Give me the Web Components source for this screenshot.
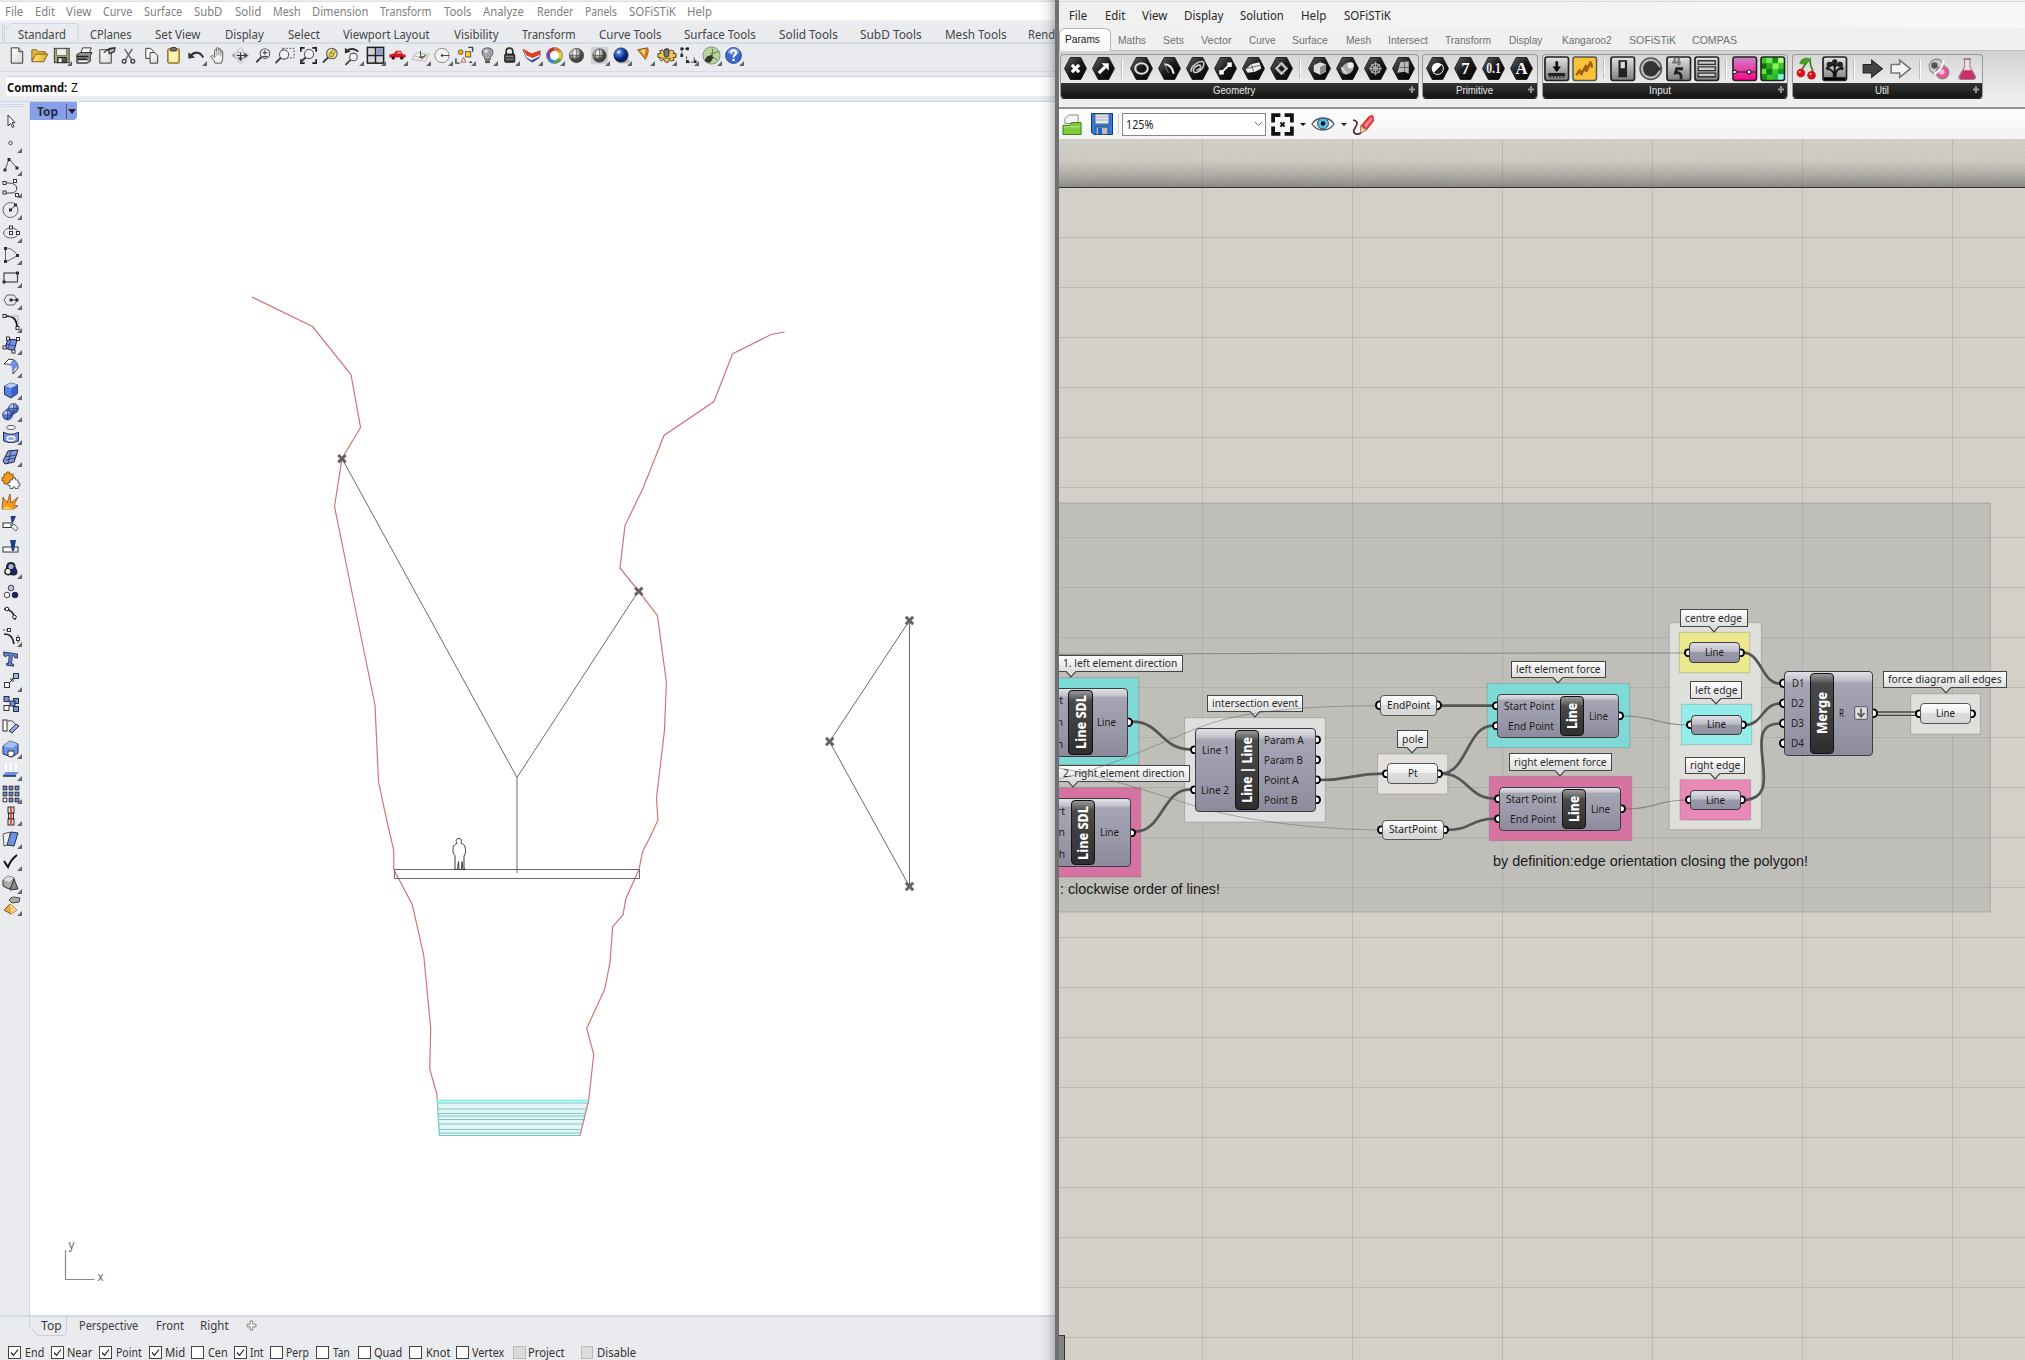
<!DOCTYPE html>
<html lang="en"><head><meta charset="utf-8"><title>Rhino and Grasshopper</title>
<style>
html,body{margin:0;padding:0;overflow:hidden}
body{width:2025px;height:1360px;display:flex;font-family:"Noto Sans","Open Sans",sans-serif;background:#e9ebef}
</style></head><body>
<rhino-app></rhino-app><gh-app></gh-app>
<script>
/* ---------- icon library, every glyph on a 22 x 22 grid ---------- */
const G = {};
const mag = (x,y,r,f='#eef2f4') => `<path d="M${x-r*.7} ${y+r*.7}L${x-r*.7-5} ${y+r*.7+5}" stroke="#444" stroke-width="2" stroke-linecap="round"/><circle cx="${x}" cy="${y}" r="${r}" fill="${f}" stroke="#555" stroke-width="1.1"/>`;
const sq = (x,y,f='#fff',s=3) => `<rect x="${x-s/2}" y="${y-s/2}" width="${s}" height="${s}" fill="${f}" stroke="#222" stroke-width=".9"/>`;
const ball = (x,y,r,g) => `<circle cx="${x}" cy="${y}" r="${r}" fill="url(#${g})" stroke="#333" stroke-width=".6"/>`;
const DEFS = `<defs><radialGradient id="gr" cx=".35" cy=".3"><stop offset="0" stop-color="#fff"/><stop offset=".55" stop-color="#b8b8b8"/><stop offset="1" stop-color="#444"/></radialGradient>
<radialGradient id="bl" cx=".35" cy=".3"><stop offset="0" stop-color="#fff"/><stop offset=".35" stop-color="#3f78e0"/><stop offset="1" stop-color="#05206e"/></radialGradient>
<radialGradient id="bm" cx=".35" cy=".3"><stop offset="0" stop-color="#cfdcff"/><stop offset="1" stop-color="#3b5ec4"/></radialGradient>
<linearGradient id="ye" x2="1"><stop offset="0" stop-color="#fbe98c"/><stop offset="1" stop-color="#e2ad2c"/></linearGradient>
<linearGradient id="pg" x2="1" y2="1"><stop offset="0" stop-color="#fff"/><stop offset="1" stop-color="#d8d8d8"/></linearGradient>
<linearGradient id="mt" x2="0" y2="1"><stop offset="0" stop-color="#e4e4e4"/><stop offset="1" stop-color="#7d7d7d"/></linearGradient>
<linearGradient id="mk" x2="1" y2="1"><stop offset="0" stop-color="#666"/><stop offset=".5" stop-color="#181818"/><stop offset="1" stop-color="#000"/></linearGradient>
<linearGradient id="pk" x2="0" y2="1"><stop offset="0" stop-color="#c8c"/><stop offset="1" stop-color="#f08"/></linearGradient></defs>`;
/* main toolbar */
G.new=`<path d="M5.500 3h8l4 4v12H5.500z" fill="url(#pg)" stroke="#333"/><path d="M13.500 3v4h4" fill="#ddd" stroke="#333"/>`;
G.open=`<path d="M3 17V5h5l2 2h7v3" fill="#eab540" stroke="#8a6414"/><path d="M3 17.500l4-8h12.500l-4 8z" fill="url(#ye)" stroke="#7a5a14"/>`;
G.save=`<rect x="3.500" y="3.500" width="15.500" height="15" fill="#a7a770" stroke="#333"/><rect x="6" y="4" width="10" height="7" fill="#eee" stroke="#555" stroke-width=".7"/><rect x="7" y="13" width="9" height="5.500" fill="#555" stroke="#222"/><rect x="8" y="14" width="3" height="4" fill="#eee"/>`;
G.print=`<path d="M7 9l2-6h9l-2 6z" fill="#fff" stroke="#333"/><path d="M3 10l4-2h12l-2 3v6l-3 2H3z" fill="#999" stroke="#222"/><path d="M3 12h12M4 15h10" stroke="#222" stroke-width="1.500"/><path d="M5 17h9" stroke="#fff" stroke-width="1.500"/>`;
G.props=`<path d="M4 5h12v14H4z" fill="url(#pg)" stroke="#333"/><path d="M8 8c3-1 4-6 12-5M13 5l7-2-1 4-5 2z" fill="#bbb" stroke="#333" stroke-width="1.300"/>`;
G.cut=`<path d="M7 4l7 11M15 4L8 15" stroke="#666" stroke-width="1.500"/><circle cx="6.500" cy="17" r="2" fill="none" stroke="#333" stroke-width="1.300"/><circle cx="15.500" cy="17" r="2" fill="none" stroke="#333" stroke-width="1.300"/>`;
G.copy=`<path d="M5 3.500h5l3 3V14H5z" fill="#fff" stroke="#333"/><path d="M9.500 8h5l3 3v8h-8z" fill="url(#pg)" stroke="#333"/>`;
G.paste=`<rect x="5" y="4" width="12" height="15" rx="1" fill="#e8cb5e" stroke="#6b5418"/><rect x="6.500" y="7" width="9" height="10.500" fill="#fdf3b3"/><rect x="8" y="2.700" width="6" height="3.500" rx="1" fill="#777" stroke="#333"/>`;
G.undo=`<path d="M5 11c4-4.500 10-4 13 2" fill="none" stroke="#333" stroke-width="2.200"/><path d="M2.500 7.500v7l7-1.500z" fill="#333"/>`;
G.pan=`<path d="M7.500 19c-1-4-4-5-4.500-7 1-2 3 0 4 1V6c0-1.800 1.800-1.800 2 0V4c0-1.800 2-1.800 2.200 0v1c.2-1.500 2-1.500 2.200 0v2c.3-1.500 2-1.200 2 0v7c0 2-1 3-1.400 5z" fill="#f2f2f2" stroke="#555"/><path d="M9.200 6v5M11.400 5v6M13.500 7v4" stroke="#777" stroke-width=".8"/>`;
G.rotview=`<ellipse cx="11" cy="11" rx="3.500" ry="8" fill="none" stroke="#bbb"/><ellipse cx="11" cy="11" rx="8.500" ry="3.500" fill="none" stroke="#bbb"/><path d="M11 8v8M7 11h10" stroke="#333" stroke-width="1.300"/><path d="M8.500 13l5 0-2.500 4zM15 8l4 3-4 3z" fill="#444"/><path d="M2 11l3-2v4z" fill="#999"/>`;
G.zoomd=mag(12.500,9,5)+`<path d="M10 8h5M12.500 5.500v5M10 12h5" stroke="#333"/>`;
G.zoomw=`<rect x="8" y="3.500" width="12" height="10" fill="none" stroke="#555" stroke-dasharray="2 1.500"/>`+mag(9.500,10,4.800);
G.zoome=`<path d="M3 7V3h4M15 3h4v4M19 15v4h-4M7 19H3v-4" fill="none" stroke="#222" stroke-width="1.800"/>`+mag(11.500,9.500,4.800);
G.zooms=mag(12.500,9,5.500,'#f4e9a0')+`<circle cx="12" cy="10" r="2.500" fill="#f5c518" stroke="#775"/><circle cx="14" cy="7" r="2" fill="#ffdf40" stroke="#775"/>`;
G.zoomu=mag(12,12.500,4)+`<path d="M5 6c4-3 9-2 12 1" fill="none" stroke="#333" stroke-width="2"/><path d="M3 3v6l6-2z" fill="#333"/>`;
G.view4=`<rect x="2.500" y="2.500" width="17" height="16.500" fill="#d3d5d8" stroke="#222" stroke-width="1.600"/><path d="M11 3v16M3 11h16" stroke="#222" stroke-width="1.600"/><rect x="12" y="3.500" width="6.500" height="6.500" fill="#8e9cc8"/>`;
G.car=`<path d="M2.500 13v-3l5-1 2-3h5l2 4h3v3z" fill="#d8141c"/><path d="M10 9l1-2h3l1 2z" fill="#f7b0b0"/><circle cx="6.500" cy="13.500" r="1.800" fill="#300"/><circle cx="15.500" cy="13.500" r="1.800" fill="#300"/>`;
G.cplane=`<path d="M2 15l5-7 13 2-4 7zM4.500 11.500l13 2M8 16l5-7M12 16l4-6" fill="#f2f2f2" stroke="#aaa" stroke-width=".8"/><path d="M11 6v7l6-2" fill="none" stroke="#333"/><path d="M10 13l4 1" stroke="#c00"/><path d="M11 12V8" stroke="#0a0"/>`;
G.osnap=`<circle cx="10.500" cy="11" r="7.500" fill="#f3f3f3" stroke="#888"/><path d="M10 11h8" stroke="#444"/><circle cx="10.500" cy="11" r="1.300" fill="#444"/>`;
G.sel=`<path d="M15 2.500h4.500V7M19 18h-3M6 19H2v-5" fill="none" stroke="#444" stroke-width="1.500"/><circle cx="7" cy="7.500" r="2.500" fill="#f7b500" stroke="#654"/><rect x="12" y="7" width="5.500" height="5.500" fill="#ffcf30" stroke="#654"/><path d="M10 13l2.500 5h-5z" fill="#f7e8d8" stroke="#a65"/>`;
G.bulb=`<path d="M11 3c-8 0-6 8-3 10v2h6v-2c3-2 5-10-3-10z" fill="#a4a4a4" stroke="#555"/><path d="M8.500 16h5v3h-5z" fill="#555"/><ellipse cx="9.500" cy="6.500" rx="1.500" ry="2" fill="#e2e2e2"/>`;
G.lock=`<path d="M7.500 10V7c0-5 7-5 7 0v3" fill="none" stroke="#333" stroke-width="1.800"/><rect x="6" y="9.500" width="10.500" height="8.500" rx="1" fill="#444" stroke="#111"/><path d="M7 12h8M7 15h8" stroke="#888"/>`;
G.layers=`<path d="M2 5l9 5 9-4v6l-8 6-6-4z" fill="#fff" stroke="#444" stroke-width=".8"/><path d="M2 4l9 5 9-3v4l-8 4-6-3z" fill="#e33b1c"/><path d="M6 13l5 3 8-4v2l-7 4-5-3z" fill="#224fae"/>`;
G.color=`<g fill="none" stroke-width="3.600"><path d="M11 4.500a6.500 6.500 0 0 1 5.600 3.300" stroke="#f08a24"/><path d="M16.600 7.800a6.500 6.500 0 0 1 0 6.500" stroke="#e6d52a"/><path d="M16.600 14.300A6.500 6.500 0 0 1 11 17.500" stroke="#4db04a"/><path d="M11 17.500a6.500 6.500 0 0 1-5.600-3.200" stroke="#2b8fd6"/><path d="M5.400 14.300a6.500 6.500 0 0 1 0-6.500" stroke="#7a3fc0"/><path d="M5.400 7.800A6.500 6.500 0 0 1 11 4.500" stroke="#dd2a44"/></g><circle cx="11" cy="11" r="4.600" fill="#fff"/><circle cx="11" cy="11" r="8.200" fill="none" stroke="#555" stroke-width=".7"/>`;
const wire=`<path d="M11 4v14M4 11h14M7.500 5.500c-1 3-1 8 0 11M14.500 5.500c1 3 1 8 0 11" fill="none" stroke="#444" stroke-width=".6"/>`;
G.shade=ball(11,11,7.500,'gr')+wire;
G.shade2=`<rect x="2" y="2" width="18" height="18" fill="#cdcfd4"/>`+ball(11,11,7,'gr')+wire;
G.rendr=`<ellipse cx="13" cy="17" rx="7" ry="2.500" fill="#bbb"/>`+ball(10.500,10.500,7.600,'bl');
G.spot=`<path d="M5 5L15 3l-2 12z" fill="#f0962a" stroke="#7a4a10"/><path d="M8 5.500l5-1-1 6z" fill="#ffd98a"/><ellipse cx="14.500" cy="9" rx="1.500" ry="5.500" fill="#c9781e" transform="rotate(15 14.500 9)"/>`;
G.gear=`<path d="M2 9h3l-1-3 3-1 1 2 2-3h3l1 3 2-2 3 2-1 2h3v4h-3l1 3-3 1-2-2-1 3h-3l-2-3-2 2-2-2 1-2H2z" fill="#ebc765" stroke="#55400f"/><rect x="8.500" y="4.500" width="5" height="8" rx="2" fill="#777" stroke="#333"/><path d="M6 14h10" stroke="#886a22"/>`;
G.dims=`<path d="M4 4v7M4 4h6M9 12v6h8M17 13v5" fill="none" stroke="#333" stroke-width="1" stroke-dasharray="2.500 1"/>`+sq(4,4,'#333',2)+sq(4,11,'#333',2)+sq(10,4,'#333',2)+sq(10,17.500,'#333',2)+sq(18,17.500,'#333',2);
G.ghopper=`<circle cx="11" cy="11" r="9" fill="#b7d59a" stroke="#7d8f6f"/><path d="M4 16c2-6 5-4 7-6l2 3-3 5c-3 1-5 0-6-2z" fill="#333"/><path d="M10 9c4 0 6-2 9-2M12 4v8l5 4" stroke="#5c7a45" fill="none"/>`;
G.help=`<circle cx="11" cy="11" r="8.300" fill="#3f66c8" stroke="#24489a"/><ellipse cx="11" cy="7" rx="6" ry="3.500" fill="#7f9be2"/><path d="M8.200 8.500c0-4 6-4 5.600 0-.2 2-2.800 2-2.800 4.500" fill="none" stroke="#fff" stroke-width="2"/><circle cx="11" cy="15.800" r="1.300" fill="#fff"/>`;
/* side toolbar */
const B='#6f8fe8';
G.arrow=`<path d="M8 5v11l2.500-2.500 2 4 1.500-1-2-3.800H15z" fill="#fff" stroke="#333"/>`;
G.point=`<circle cx="10.500" cy="11" r="1.700" fill="#fff" stroke="#444"/>`;
G.pline=`<path d="M5 16L9 5l8 9" fill="none" stroke="#555"/>`+sq(5,16,'#444',2)+sq(9,5.500,'#444',2)+sq(17,14,'#444',2);
G.curve=`<path d="M4 6h5c10 0 10 10 2 10H5" fill="none" stroke="#444"/>`+sq(4.500,6)+sq(15,4)+sq(4.500,15.500)+sq(17,18);
G.circle=`<circle cx="10.500" cy="11" r="7.500" fill="none" stroke="#666"/><path d="M10.500 11l5-5" stroke="#333"/>`+sq(10.500,11,'#444',2)+sq(15.500,6,'#444',2);
G.ellipse=`<ellipse cx="11" cy="11" rx="7.500" ry="5" fill="none" stroke="#666"/>`+sq(11,11)+sq(11,5.500)+sq(18,11);
G.arc=`<path d="M5.500 4v14L17 12M5.500 4c6 0 9 3 11.500 7" fill="none" stroke="#666"/>`+sq(5.500,4.500,'#444',2)+sq(5.500,17.500,'#444',2)+sq(17.500,11.500,'#444',2);
G.rect=`<rect x="4" y="6" width="13.500" height="9" fill="none" stroke="#444" stroke-width="1.200"/>`+sq(4,15,'#444',2)+sq(17.500,6,'#444',2);
G.poly=`<path d="M7 6h7l3.500 5-3.500 5H7l-3-5z" fill="none" stroke="#666"/><path d="M11 11h6" stroke="#333"/>`+sq(11,11,'#444',2)+sq(17,11,'#444',2);
G.fillet=`<path d="M4.500 5c9 0 12.500 3 12.500 12" fill="none" stroke="#111" stroke-width="1.700"/><path d="M9 5h9v8" fill="none" stroke="#aaa"/>`+sq(4.500,5)+sq(17.500,17);
G.surf=`<path d="M8 5l9 1-3 11-9-3z" fill="${B}" stroke="#223"/><path d="M11 5l-3 10M6 10l9 2" stroke="#223" stroke-width=".6"/>`+sq(8,4.500)+sq(18,5)+sq(4.500,13.500)+sq(13.500,17.500);
G.sfill=`<path d="M4 8l5-5 5 1c3 2 4 4 4 8l-5 6V11c-2-3-5-3-9-3z" fill="#fff" stroke="#333"/><path d="M9 9l4-5c3 1 4 3 5 6l-5 5c0-4-1-5-4-6z" fill="${B}"/>`;
G.box=`<path d="M4.500 7l6.500-3 6.500 2v8.500L11 19l-6.500-3.500z" fill="#5b80e6" stroke="#234"/><path d="M4.500 7l6.500-3 6.500 2-6 3z" fill="#b9caff"/><path d="M11.500 9l6-3v8.500L11.500 18z" fill="#3d5fc4"/>`;
G.spheres=`<path d="M7 14l7-7" stroke="#5577d8" stroke-width="9"/>`+ball(13.500,7.500,5,'bm')+ball(7.500,14,5,'bm')+`<path d="M7.500 9v10M3 14h9M13.500 3v9M9 7.500h9" stroke="#1d2f6e" stroke-width=".6"/>`;
G.proj=`<ellipse cx="11" cy="3.500" rx="4.500" ry="2" fill="#fff" stroke="#555"/><path d="M3.500 8c5 3 10 3 15 0v9c-5 2-10 2-15 0z" fill="${B}" stroke="#234"/><ellipse cx="11" cy="14.500" rx="4" ry="2.300" fill="#8fa8f2" stroke="#fff" stroke-width="1.400"/>`;
G.mesh=`<path d="M3 15L8 5l10-1-4 12-9 2z" fill="#7d9aea" stroke="#223"/><path d="M11 5L8 17M5 11l11-2M6 14l9-2" stroke="#223" stroke-width=".7"/>`;
G.puzzle=`<path d="M4 5h2.500V3h3v2H13v3h1.500v3H12v2H9v2H4v-3H2V8.500h2z" fill="#f39b1e" stroke="#744a0c" stroke-width=".8"/><path d="M10 11h2.500V9h3v2h2.500v3h2v3h-2v2.500h-3V18h-2v1.500h-3V16.500H8v-3h2z" fill="#fff" stroke="#444" stroke-width=".8"/>`;
G.boom=`<path d="M2 18l1-12 4 6 3-9 1 9 7-6-4 8 4 1-5 3z" fill="#f39b1e" stroke="#8a4b10" stroke-width=".8"/><path d="M2.500 18l3-3 8 3z" fill="#ffd34d"/>`;
G.trim=`<rect x="3" y="10" width="8" height="4.500" fill="#fff" stroke="#333"/><path d="M10.500 3h5.500l-4 9z" fill="#1f3c8c"/><path d="M11 14l3-3 4 4-2 3z" fill="#eee" stroke="#666"/>`;
G.split=`<rect x="3" y="11" width="15" height="5" fill="#fff" stroke="#333"/><path d="M10 4h6l-2 11h-2z" fill="#1f3c8c"/>`;
G.group=`<path d="M11 4c5 0 4 4 5 6 4 6-1 9-5 7-6 2-9-3-5-7 0-3 1-6 5-6z" fill="#222"/><circle cx="11" cy="8.500" r="2.600" fill="#a5b2f2"/><circle cx="8" cy="13.500" r="2.400" fill="#fff"/><circle cx="14" cy="13.500" r="2.600" fill="#1c237e"/>`;
G.ungroup=`<circle cx="11" cy="7" r="2.800" fill="#b5bff5" stroke="#444"/><circle cx="7" cy="14" r="2.800" fill="#fff" stroke="#444"/><circle cx="15" cy="14" r="2.800" fill="#1c237e" stroke="#222"/>`;
G.ptson=`<path d="M4 6c6 0 10 3 11 11" fill="none" stroke="#222" stroke-width="1.500"/><circle cx="7" cy="6" r="1.800" fill="#fff" stroke="#222"/><circle cx="14.500" cy="14" r="1.800" fill="#fff" stroke="#222"/>`;
G.ptsoff=`<path d="M4 8c7 0 9 4 10 10" fill="none" stroke="#222" stroke-width="1.700"/><path d="M3 4h8M18 9v9" stroke="#555" stroke-dasharray="2 1"/>`+sq(9,4)+sq(18,13);
G.text=`<path d="M3.500 4l14 2v4h-2.500l-.7-2-2-.3-.8 8 2 .5v2l-7-1v-2l2 .2.700-8-2-.3-1 1.500L4 8z" fill="#5f86e4" stroke="#223" stroke-width=".8"/>`;
G.move=sq(7,15,'#fff',5)+sq(16,6,'#9db4f4',5)+`<path d="M9 13l4-4M13 12V9h-3" fill="none" stroke="#333"/>`;
G.copyo=sq(6.500,6,B,5)+sq(6.500,15,'#fff',5)+sq(16,8,B,5)+sq(12.500,10.500,B,5)+sq(16,16,B,5);
G.rotate=`<rect x="3" y="5" width="4" height="11" fill="#fff" stroke="#333"/><path d="M8 6c4-1 6 1 7 3" fill="none" stroke="#333"/><path d="M9 16l7-7 3 2-7 7z" fill="#8ba6f0" stroke="#333"/>`;
G.scale=`<path d="M3 8l7-5 8 3v9l-6 4-9-3z" fill="#6f93ec" stroke="#234"/><path d="M3 8l7-5 8 3-6 4z" fill="#a8bff8"/><path d="M8 13h6v4l-3 2-3-1z" fill="#fff" stroke="#333"/>`;
G.extr=`<path d="M3 15l3-3h13l-4 4H3z" fill="${B}"/><path d="M6 12V3M11 12V3M16 12V3" stroke="#fff" stroke-width="2"/><path d="M3 16h13" stroke="#234" stroke-width="1.500"/>`;
G.array=[5,11,17].map(y=>[5,11,17].map(x=>sq(x,y,x==5&&y==17?'#fff':B,3.700)).join('')).join('');
G.align=sq(11,5,'#ddd',6)+sq(11,11,'#ddd',5)+sq(11,17,'#ddd',6)+`<path d="M11 2v18" stroke="#d33" stroke-width="1.600"/>`;
G.twist=`<path d="M3 6l7-2v12l-6 2z" fill="#eee" stroke="#555"/><path d="M11 4l7 1-4 13-7-1z" fill="${B}" stroke="#234"/>`;
G.check=`<path d="M4 11l4 6c2-5 5-9 9-12" fill="none" stroke="#111" stroke-width="2"/>`;
G.solids=`<path d="M3 8l5-4 6 2v7l-5 4-6-3z" fill="#aaa" stroke="#333"/><path d="M14 7l4 10-8 1z" fill="#888" stroke="#333"/><path d="M3 8l6 2 5-4-6-2z" fill="#ddd"/>`;
G.pyr=`<path d="M10 9l7 6-6 4-7-4z" fill="#f0a537" stroke="#7a5a2a"/><path d="M10 9l1 10 6-4z" fill="#ffd48a"/><path d="M9 5c3-4 5-3 11-2l-1 4-7 1z" fill="#aaa" stroke="#444"/>`;
/* ribbon */
const hex = s => `<path d="M6 .5h10L21.500 11 16 21.500H6L.5 11z" fill="url(#mk)" stroke="#111" stroke-width=".8"/>`+s;
const tile = s => `<rect x="0" y="0" width="22" height="22" rx="2" fill="url(#mt)" stroke="#222" stroke-width="1.600"/>`+s;
G.h_pt=hex(`<path d="M7.500 7.500l7 7M14.500 7.500l-7 7" stroke="#fff" stroke-width="3"/>`);
G.h_vec=hex(`<path d="M6.500 15.500l6-6" stroke="#fff" stroke-width="3"/><path d="M9 6h7v7z" fill="#fff"/>`);
G.h_circ=hex(`<ellipse cx="11" cy="11" rx="6" ry="5" fill="none" stroke="#ddd" stroke-width="2"/>`);
G.h_arc=hex(`<path d="M6 7c5 0 8 4 9 9" fill="none" stroke="#eee" stroke-width="2"/><path d="M6 7l4 8" stroke="#777"/>`);
G.h_crv=hex(`<path d="M5 14c-2-6 13-14 12-7-1 7-10 10-10 6s7-7 7-4-4 4-4 3" fill="none" stroke="#ccc" stroke-width="1.500"/>`);
G.h_line=hex(`<path d="M7 15l8-8" stroke="#fff" stroke-width="1.800"/><rect x="5" y="12.500" width="4.300" height="4.300" fill="#fff"/><rect x="12.700" y="5.200" width="4.300" height="4.300" fill="#fff"/>`);
G.h_pln=hex(`<path d="M3.500 12l5-5 8-2 2 6-6 3-7 1z" fill="#eee"/><path d="M9 7l2 7M5 11l12-3" stroke="#555" stroke-width=".8"/>`);
G.h_rect=hex(`<path d="M11 6l5 5-5 5-5-5z" fill="none" stroke="#ccc" stroke-width="2"/><path d="M8 5l7 7M7 10l7 7" stroke="#999" stroke-width=".8"/>`);
G.h_box=hex(`<path d="M5.500 8l6-3 5.500 2v7l-5.500 3-6-3z" fill="#ddd"/><path d="M11.500 9.500v7l5.500-3V7z" fill="#888"/>`);
G.h_brep=hex(`<ellipse cx="11" cy="11" rx="6.500" ry="5" fill="#aaa" transform="rotate(-40 11 11)"/><circle cx="14" cy="8" r="3" fill="#eee"/><path d="M5 10l5 6" stroke="#fff"/>`);
G.h_mesh=hex(`<path d="M11 4.500v13M5 11h12M7 7l8 8M15 7l-8 8" stroke="#aaa" stroke-width="1.300"/><circle cx="11" cy="11" r="4.500" fill="none" stroke="#aaa" stroke-width="1.300"/>`);
G.h_srf=hex(`<path d="M8 5l8-1v12l-4-2-7 1z" fill="#bbb"/><path d="M12 5v9M7 10h9" stroke="#666"/>`);
G.h_bool=hex(`<circle cx="11" cy="11" r="5.500" fill="#fff"/><path d="M15 7a5.500 5.500 0 1 1-8 8z" fill="#222" stroke="#fff" stroke-width=".9"/>`);
const ht=(t,s)=>`<text x="11" y="${11+s*.35}" font-family="Liberation Serif,serif" font-weight="700" font-size="${s}" text-anchor="middle" fill="#fff">${t}</text>`;
G.h_7=hex(ht('7',16));
G.h_01=hex(`<text x="4" y="15.500" font-family="Liberation Serif,serif" font-weight="700" font-size="13.500" textLength="14" lengthAdjust="spacingAndGlyphs" fill="#eee">0.1</text>`);
G.h_A=hex(ht('A',16));
G.t_sl=tile(`<path d="M11 4v9" stroke="#111" stroke-width="2.500"/><path d="M7 9h8l-4 5z" fill="#111"/><path d="M3 15h16v3H3z" fill="#222"/><path d="M5 18v2M8 18v2M11 18v2M14 18v2M17 18v2" stroke="#222"/>`);
G.t_gr=`<rect width="22" height="22" rx="2" fill="#f8c338" stroke="#555" stroke-width="1.400"/><path d="M3 17c4-5 3-6 4-3s0 3 3-2 2-5 2-1 1 2 3-3 1-4 3 2" fill="none" stroke="#a45e10" stroke-width="2.300"/>`;
G.t_tog=tile(`<rect x="7" y="3" width="8" height="16" fill="#222"/><rect x="9" y="4.500" width="4" height="6" fill="#ddd"/>`);
G.t_knob=`<circle cx="11" cy="11" r="10" fill="#bbb" stroke="#555" stroke-width="1.500"/><circle cx="11" cy="11" r="7.200" fill="#333"/><path d="M15 6l6 5-6 5z" fill="#333"/>`;
G.t_num=tile(`<path d="M8 1l-2 4h7M11 1v7" stroke="#777" stroke-width="2" fill="none"/><path d="M15 11H9l-1 4c4-1 6 1 5 6" fill="none" stroke="#222" stroke-width="2.600"/>`);
G.t_list=tile(`<path d="M3 3.500h16v3.500H3zM3 9.200h16v3.500H3zM3 15h16v3.500H3z" fill="#ccc" stroke="#333" stroke-width="1.200"/>`);
G.t_pink=`<rect width="22" height="22" rx="2" fill="url(#pk)" stroke="#222" stroke-width="1.500"/><path d="M1 14h20" stroke="#222"/><circle cx="15" cy="14" r="1.900" fill="#fff" stroke="#222"/><circle cx="1.500" cy="14" r="1.700" fill="#fff" stroke="#222"/>`;
G.t_green=`<rect width="22" height="22" rx="2" fill="#38c828"/>`+[[5,0,'#7be85a'],[11,0,'#149018'],[16,0,'#b0ff80'],[0,6,'#0e6b10'],[5,6,'#2ea822'],[11,6,'#86f060'],[0,11,'#66e040'],[5,11,'#0c7a14'],[16,11,'#129a2a'],[11,16,'#22b840'],[16,16,'#7cfcd0'],[0,16,'#1a8a1c']].map(a=>`<rect x="${a[0]}" y="${a[1]}" width="5.500" height="5.500" fill="${a[2]}"/>`).join('')+`<rect width="22" height="22" rx="2" fill="none" stroke="#222" stroke-width="1.500"/>`;
G.cherry=`<path d="M6 13C8 8 10 6 14 2c0 5 1 8 3 12" fill="none" stroke="#3a7a1a" stroke-width="1.500"/><path d="M4 6c2-6 8-6 10-4-1 4-6 6-10 4z" fill="#4aa020"/><circle cx="5.500" cy="15" r="4" fill="#d8101c"/><circle cx="15.500" cy="17" r="4" fill="#d8101c"/><circle cx="4.500" cy="14" r="1" fill="#fbb"/><circle cx="14.500" cy="16" r="1" fill="#fbb"/>`;
G.tree=tile(`<path d="M10 19c1-5-1-6-5-8M12 19c-1-5 1-7 5-9M11 17V5M11 9L7 5M11 9l5-4" stroke="#111" stroke-width="1.700" fill="none"/><g fill="#222"><circle cx="6" cy="7" r="2.600"/><circle cx="11" cy="4.500" r="2.500"/><circle cx="16" cy="7" r="2.600"/><circle cx="4.500" cy="10.500" r="1.800"/><circle cx="17.500" cy="10.500" r="1.800"/></g><path d="M1 19h20v2.500H1z" fill="#000"/>`);
G.ar1=`<path d="M2 7h8V3l10 8-10 8v-4H2z" fill="#444" stroke="#222"/>`;
G.ar2=`<path d="M2 7h8V3l10 8-10 8v-4H2z" fill="#f4f4f4" stroke="#777" stroke-width="1.500"/>`;
G.dna=`<circle cx="9" cy="9" r="7" fill="#ccc" stroke="#888"/><circle cx="7" cy="8" r="3" fill="#555"/><circle cx="14.500" cy="14.500" r="6" fill="#e05a90" stroke="#888"/><circle cx="14" cy="14" r="2.500" fill="#fbd"/><path d="M7 16c4-2 7-6 9-13" stroke="#fff" stroke-width="2" fill="none"/>`;
G.flask=`<path d="M9 2h5v7l5 9c1 2-1 3-2 3H5c-1 0-2-1-1-3l5-9z" fill="#f5dce6" stroke="#99818b"/><path d="M7.500 12.500h8l3.500 6c0 2-1 2-2 2H5.500c-2 0-1.500-2-1-2.500z" fill="#c9306c"/><path d="M8 2h7" stroke="#888" stroke-width="1.500"/>`;
/* canvas toolbar */
G.fopen=`<path d="M3 10V5l4-4h10v9z" fill="#f4f4f4" stroke="#888"/><path d="M1 21.500V12h7l2-3h10v12.500z" fill="#7fca3c" stroke="#3d7a1c"/><path d="M2 13.500h17" stroke="#c0ea90"/>`;
G.fsave=`<path d="M.5 .5h21v21H3l-2.500-2z" fill="#2b7ae6" stroke="#12357c"/><rect x="4" y="1" width="14" height="10" fill="#e4e9ee" stroke="#567"/><path d="M5 4h12M5 7h12" stroke="#aab"/><rect x="5" y="14" width="12" height="7.500" fill="#bbb" stroke="#345"/><rect x="7" y="15" width="4" height="6" fill="#1b62cc"/>`;
G.focus=`<path d="M2 9V2h7M13 2h7v7M20 13v7h-7M9 20H2v-7" fill="none" stroke="#111" stroke-width="3.600"/><path d="M9 9l4 4M13 9l-4 4" stroke="#111" stroke-width="1.800"/>`;
G.eye=`<path d="M0 11C5 3 17 3 22 11 17 19 5 19 0 11z" fill="#f4f8fa" stroke="#555" stroke-width="1.300"/><circle cx="11" cy="10.500" r="5.500" fill="#58b8e8" stroke="#357"/><circle cx="11" cy="10.500" r="2.200" fill="#111"/>`;
G.brush=`<path d="M8.500 13L16 4c4-3 6-3 6 4l-7 9z" fill="#e0303a"/><path d="M12 12l7-8 2 2-7 9z" fill="#f88a90"/><path d="M8.500 13l6.500 4-6.500 3.500z" fill="#e8c890" stroke="#654" stroke-width=".6"/><path d="M9 20C3 23 0 19 3 15s3-7-2-8" fill="none" stroke="#5c2424" stroke-width="1.700"/>`;

const shadow=(el,html)=>{const r=el.shadowRoot||el.attachShadow({mode:'open'});r.innerHTML=html;return r};
/* text rows: [text, left, right] in window coordinates, turned into flow margins */
const row=(items,x0,cls='')=>{let p=x0;return items.map(([t,a,b,k])=>{const m=(a-p).toFixed(1);p=b;return `<fit-text w="${(b-a).toFixed(1)}" style="margin-left:${m}px;${k||''}" class="${cls}">${t}</fit-text>`}).join('')};

class UiIcon extends HTMLElement{connectedCallback(){const s=this.getAttribute('size')||22;
 shadow(this,`<style>:host{display:flex;flex:none;align-items:center;justify-content:center;position:relative}svg{display:block;overflow:visible}i{position:absolute;right:.5px;bottom:1px;width:0;height:0;border-left:5px solid transparent;border-bottom:5px solid #666}</style><svg width="${s}" height="${s}" viewBox="0 0 22 22" fill="none">${DEFS}${G[this.getAttribute('name')]||''}</svg>${this.hasAttribute('menu')?'<i></i>':''}`)}}

class RhinoToolbar extends HTMLElement{connectedCallback(){
 const n='new open save print props cut copy paste undo pan rotview zoomd zoomw zoome zooms zoomu view4 car cplane osnap sel bulb lock layers color shade shade2 rendr spot gear dims ghopper help'.split(' ');
 const m=[2,8,15,16,17,18,19,20,21,22,23,24,26,27,28,29,30,31,32];
 shadow(this,`<style>:host{display:flex;height:26px;padding-left:5.800px;box-sizing:border-box}ui-icon{width:22.400px;height:22px;margin-top:1px}</style>`+n.map((k,i)=>`<ui-icon size="21" name="${k}" ${m.includes(i)?'menu':''}></ui-icon>`).join(''))}}

class RhinoSide extends HTMLElement{connectedCallback(){
 const n='arrow point pline curve circle ellipse arc rect poly fillet surf sfill box spheres proj mesh puzzle boom trim split group ungroup ptson ptsoff text move copyo rotate scale extr array align twist check solids pyr'.split(' ');
 const m=i=>(i>0&&i<16)||i==20||i==23||i==25||i>27;
 shadow(this,`<style>:host{display:flex;flex-direction:column;width:30px;border-right:1.500px solid #d3daea;box-sizing:border-box;flex:none;background:#e9ebef}u{height:1px;width:23px;margin:2px 0 2.300px 1px;border-top:1px solid #cfd8ea;border-bottom:1px solid #cfd8ea;flex:none}ui-icon{width:22px;height:22.450px}</style><u></u>`+n.map((k,i)=>`<ui-icon name="${k}" size="22" ${m(i)?'menu':''}></ui-icon>`).join(''))}}

class RhinoView extends HTMLElement{connectedCallback(){
 const X=(x,y)=>`<path d="M${x-3.700} ${y-3.700}l7.400 7.400m0-7.400l-7.400 7.400" stroke="#646464" stroke-width="3"/>`;
 let w='';[1103,1109,1113.500,1116,1119.500,1124,1129.500,1133].forEach(y=>{const k=(y-1100)/35.300;w+=`<path d="M${437.300+2*k} ${y}H${588.700-8.700*k}" stroke="#7fcaca" stroke-width="1"/>`});
 shadow(this,`<style>:host{display:block;position:relative;flex:1;background:#fff;overflow:hidden}svg{display:block}
 .tag{position:absolute;left:0;top:0;width:46.500px;height:18px;background:#869fe6;border-radius:0 0 4px 0;display:flex;align-items:center;color:#222e48;font-size:12.500px;font-weight:700}
 .tag u{width:1px;height:15px;background:#48568a;margin-left:7.500px}.tag i{border:4px solid transparent;border-top:5px solid #222;margin:4px 0 0 1.500px}</style>
 <svg width="1025" height="1213" viewBox="30 102 1025 1213" fill="none">
 <g stroke="#d27474" stroke-width="1.200"><path d="M252 297L312.500 326.500 351 374.500 360.500 427.500 342 458.500 334.500 506.500 356 612 375 705 378.500 781.500 386.700 820 393.700 850V869.300L412.300 904.700 423.700 955 430.700 1028.300 429.700 1069 436.700 1093.300 437.300 1100"/>
 <path d="M784.500 332L771 334.500 732.500 354 714 401.500 664 435.500 643 488.200 625 525.600 620 568 638.500 591 657.400 615.500 666.400 682 664.500 730 656.500 798 658 820 650 837.300 642.700 851.300 639 869.300 625.700 899.300 623 915 612.700 926.700 610 962.300 604.700 989.300 586.700 1028.300 593.700 1054.300 588.700 1100 580 1135.300"/></g>
 <path d="M437.300 1100H588.700L580 1135.300H439.300z" fill="#e2f4f3"/>${w}<path d="M437.300 1100.500l2 35H580" stroke="#76c8c8" stroke-width="1.200"/><path d="M437.300 1100.500H588.700" stroke="#66f6f6" stroke-width="1.600"/><path d="M588.700 1100L580 1135.300" stroke="#c88a8a" stroke-width="1.200"/>
 <g stroke="#6b6b6b" stroke-width="1"><path d="M342 458.500L517 777.500 638.500 591M517 777.500V873M394.500 869.500H639.500V878.500H394.500zM909.500 620.500L829.500 741.500 909.500 886.500z"/></g>
 <path d="M459 838.500c-3 0-3.500 2-2 5-3 1-4 3-4 6s0 4 2 6l0 14h2.500l1-8 .500 8h2.500l.500-8 1 8h2l-1-1.500 0-12c2-3 2-5 1-9s-4-3-4-4c1-2 .5-4.500-2-4.500z" stroke="#3a3a3a" stroke-width="1"/>
 ${X(342,458.700)}${X(638.800,591.300)}${X(909.500,620.500)}${X(829.700,741.500)}${X(909.500,886.500)}
 <path d="M65.500 1250V1279.500H94.500" stroke="#8a8a8a" stroke-width="1.200"/>
 <text x="68.500" y="1249" font-size="13" fill="#666" textLength="6" lengthAdjust="spacingAndGlyphs">y</text><text x="97.500" y="1281" font-size="13" fill="#666" textLength="6" lengthAdjust="spacingAndGlyphs">x</text></svg>
 <div class="tag"><fit-text w="21" style="margin-left:7px">Top</fit-text><u></u><i></i></div>`)}}

class RhinoOsnap extends HTMLElement{connectedCallback(){
 const d=[['End',8.4,25.3,44.6,1],['Near',51,67.3,92.6,1],['Point',99.3,115.7,141.4,1],['Mid',149,165,185.2,1],['Cen',191.5,208,227.7],['Int',234.4,250.4,264,1],['Perp',270.2,286.6,309.4],['Tan',316.5,333.4,350.2],['Quad',358.6,374.6,402.8],['Knot',409.5,426,450.4],['Vertex',456.7,472.7,505],['Project',513.5,528.7,565.3,2],['Disable',580.9,596.9,636,2]];
 let p=0;const h=d.map(([t,b,a,e,c])=>{const s=`<b class="${c==2?'off':''}" style="margin-left:${(b-p).toFixed(1)}px">${c==1?'<svg width="11" height="11" viewBox="0 0 11 11"><path d="M2 5.500l2.500 2.800L9 2.500" fill="none" stroke="#222" stroke-width="1.200"/></svg>':''}</b><fit-text w="${(e-a).toFixed(1)}" style="margin-left:${(a-b-12.6).toFixed(1)}px">${t}</fit-text>`;p=e;return s}).join('');
 shadow(this,`<style>:host{display:flex;height:24px;flex:none;align-items:center;padding-top:9.500px;box-sizing:border-box;color:#333;font-size:12.500px;line-height:14px}b{flex:none;width:12.600px;height:12.600px;box-sizing:border-box;border:1px solid #444;background:#fff;display:block}b svg{display:block}.off{border-color:#bbb;background:#dcdcdc}</style>`+h)}}

class RhinoApp extends HTMLElement{connectedCallback(){
 const menu=[['File',4.7,23],['Edit',34.8,54.8],['View',66.2,91.6],['Curve',103,132.2],['Surface',144.3,182.5],['SubD',194.4,222.7],['Solid',234.6,261],['Mesh',273,300.5],['Dimension',312,368.4],['Transform',380.6,432],['Tools',444,471.5],['Analyze',483.4,524.3],['Render',536.8,573.3],['Panels',585,617],['SOFiSTiK',628.7,675.7],['Help',687.5,712.5]];
 const tabs=[['Standard',17.6,65.6],['CPlanes',89.6,131.1],['Set View',155,200.4],['Display',225,263.7],['Select',288,319.8],['Viewport Layout',343.4,430],['Visibility',454.3,499],['Transform',522.5,576],['Curve Tools',599.3,661.8],['Surface Tools',684,755.8],['Solid Tools',779.5,838.3],['SubD Tools',860.6,922.4],['Mesh Tools',945,1006.6],['Rend',1028,1055]];
 const vt=[['Top',40.8,61.5],['Perspective',78.7,138],['Front',156,184],['Right',200,228.6]];
 shadow(this,`<style>:host{display:flex;flex-direction:column;position:relative;width:1055px;height:1360px;flex:none;background:#e9ebef;overflow:hidden;font-size:13px}
 .menu{border-top:1px solid #dcdfe3;margin-top:1px;height:18px;background:#fff;display:flex;align-items:center;color:#808080;flex:none}
 .tabs{height:23.500px;display:flex;align-items:center;color:#454545;border-bottom:2px solid #d5dbe5;box-sizing:border-box;flex:none;background:linear-gradient(#f2f3f5,#e9ebef 5px)}
 .tabs fit-text{position:relative;top:3px}
 .tabs svg{width:80px;height:20px;margin:3px -80px 0 0;flex:none}
 .tb{height:28.500px;flex:none;border-bottom:1px solid #d5dbe5;box-sizing:border-box}
 .cmd{height:20px;margin:4px 0 5px 6px;border-top:1px solid #cbd2e0;background:#fff;display:flex;align-items:center;color:#111;box-sizing:border-box;flex:none}
 .mid{flex:1;display:flex;border-top:1px solid #cdd4e4;min-height:0;border-bottom:2px solid #d3dae8}
 .vt{height:19.500px;flex:none;display:flex;align-items:center;color:#3c3c3c;position:relative;line-height:17px;padding-bottom:1px;box-sizing:border-box}
 .vt svg{margin-right:-40px;flex:none}.plus{margin-left:17px}
 .shade{position:absolute;right:0;top:0;width:16px;height:100%;background:linear-gradient(90deg,rgba(60,60,60,0),rgba(60,60,60,.08) 55%,rgba(60,60,60,.3))}</style>
 <div class="menu">${row(menu,0)}</div>
 <div class="tabs"><svg viewBox="0 0 80 20" fill="none" stroke="#cbd3e2"><path d="M2.500 1v19M4.500 1v19M5 7l6-5.500H76q2 0 2 2V20"/></svg>${row(tabs,0)}</div>
 <div class="tb"><rhino-toolbar></rhino-toolbar></div>
 <div class="cmd">${row([['<b>Command:</b>',7.4,67.6],['Z',71,78]],6)}</div>
 <div class="mid"><rhino-side></rhino-side><rhino-view></rhino-view></div>
 <div class="vt"><svg width="40" height="22" style="margin-left:29px" viewBox="0 0 40 22" fill="none" stroke="#c5cde0"><path d="M.5 0v11l8 9.500H34q3.500 0 3.500-3.500V0"/></svg>${row(vt,29)}<svg class="plus" style="margin-right:0" width="11" height="11" viewBox="0 0 11 11"><path d="M4.200 1h2.600v3.200H10v2.600H6.800V10H4.200V6.800H1V4.200h3.200z" fill="#fff" stroke="#777" stroke-width=".9"/></svg></div>
 <rhino-osnap></rhino-osnap><div class="shade"></div>`)}}

class GhGroup extends HTMLElement{connectedCallback(){
 shadow(this,`<style>:host{display:flex;flex-direction:column;height:45px;box-sizing:border-box;border:1px solid #999;border-bottom-color:#222;border-radius:4px;background:linear-gradient(#d6d6d6,#ececec 30px);overflow:hidden;flex:none}
 .i{flex:1;display:flex;align-items:center;padding:0}.i ui-icon{width:28px}.i u{width:10px;height:20px;background:linear-gradient(90deg,transparent 4px,#bbb 4px 5px,#fff 5px 6px,transparent 6px)}
 .l{height:15px;background:linear-gradient(#333,#161616);color:#e6e6e6;font:11px "Liberation Sans",sans-serif;display:flex;align-items:center;justify-content:center;position:relative;padding-right:11px}
 svg{position:absolute;right:2px;top:2px}</style><div class="i">${this.getAttribute('icons').split(' ').map(n=>n=='|'?'<u></u>':`<ui-icon size="${n[0]=='h'?23:23.5}" name="${n}"></ui-icon>`).join('')}</div><div class="l"><fit-text w="${this.getAttribute('tw')}">${this.getAttribute('label')}</fit-text><svg width="8" height="9"><path d="M4 1v7M1 4.500h6" stroke="#999" stroke-width="1.800"/></svg></div>`)}}

class GhNode extends HTMLElement{connectedCallback(){
 const g=k=>this.getAttribute(k),param=this.hasAttribute('param');
 const side=(s,dir,h)=>(s||'').split(';').filter(Boolean).map(t=>{const[a,w]=t.split('@');return `<div class="r ${dir}" style="height:${h}px"><fit-text class="t" w="${w}">${a}</fit-text>${a=='R'?'<svg width="14" height="14" viewBox="0 0 14 14"><rect x=".7" y=".7" width="12.600" height="12.600" rx="1" fill="#ddd" stroke="#555"/><path d="M7 2.500v8M3.500 7L7 10.800 10.500 7" fill="none" stroke="#555" stroke-width="1.700"/></svg>':''}<p></p></div>`}).join('');
 const base=`<style>:host{position:absolute;box-sizing:border-box;border:1.400px solid #3c3c44;border-radius:4px;display:flex;color:#1c1c20;font-size:11.500px;background:linear-gradient(#e2e2e8,#c2c2cc 10%,#a6a5b4 13%,#9b9aab 55%,#8d8b9b)}
 :host([param]){align-items:center;justify-content:center;background:linear-gradient(#dedee4,#bdbdc8 45%,#9a99a8 50%,#9291a2)}
 :host([light]){background:linear-gradient(#fdfdfd,#efefef 45%,#dcdcdc 50%,#d6d6d6);border-color:#555}
 .t{position:relative;top:-.8px}
 .c{display:flex;flex-direction:column;justify-content:center}.r{position:relative;display:flex;align-items:center}
 .in{justify-content:flex-end;padding-right:5.500px}.out{padding-left:4.500px}.out svg{margin-left:10px}
 p{position:absolute;margin:0;top:50%;width:5px;height:9.500px;box-sizing:border-box;background:#fff;border:2px solid #000;transform:translateY(-50%)}
 .in p,p.a{left:-6px;border-right:0;border-radius:5px 0 0 5px}.out p,p.z{right:-6px;border-left:0;border-radius:0 5px 5px 0}
 .bar{width:24.500px;margin:1px 0;flex:none;box-sizing:border-box;border:1px solid #111;border-radius:4px;background:linear-gradient(#999,#5a5a5a 8px,#4a4a4a 9px,#3c3c3c 60%,#2e2e2e);display:flex;align-items:center;justify-content:center;color:#fff;font-weight:800;font-size:13.500px}
 .bar fit-text{transform:rotate(-90deg);flex:none}</style>`;
 if(param)shadow(this,base+`<fit-text class="t" w="${g('tw')}">${g('label')}</fit-text><p class="a"></p><p class="z"></p>`);
 else shadow(this,base+`<div class="c" style="width:${g('bx')-1.4}px">${side(g('ins'),'in',g('ih')||20)}</div><div class="bar"><fit-text w="${g('tw')}">${g('label')}</fit-text></div><div class="c" style="flex:1">${side(g('outs'),'out',20)}</div>`)}}

class GhNote extends HTMLElement{connectedCallback(){const t=+this.getAttribute('tip');
 shadow(this,`<style>:host{position:absolute;box-sizing:border-box;height:17.500px;border:1.500px solid #444;background:linear-gradient(#fff,#dedede);display:flex;align-items:center;justify-content:center;font-size:11.500px;color:#2a2a2a;white-space:nowrap}fit-text{position:relative;top:-1px}svg{position:absolute;left:${t-8}px;top:14.300px}</style><fit-text w="${this.getAttribute('tw')}">${this.textContent}</fit-text><svg width="14" height="9" viewBox="0 0 14 9"><path d="M0 0H14L12 1.500 7 7 2 1.500z" fill="#dedede"/><path d="M2 1.300L7 6.800 12 1.300" fill="none" stroke="#444" stroke-width="1.200"/></svg>`)}}

class GhCanvas extends HTMLElement{connectedCallback(){
 const OX=1059,OY=139,P=(x,y,w,h)=>`left:${(x-OX).toFixed(1)}px;top:${(y-OY).toFixed(1)}px;${w?`width:${w.toFixed(1)}px;`:''}${h?`height:${h.toFixed(1)}px`:''}`;
 const box=(x,y,X,Y,c,b='rgba(90,90,90,.28)')=>`<rect x="${x}" y="${y}" width="${X-x}" height="${Y-y}" fill="${c}" stroke="${b}"/>`;
 const W=(x,y,X,Y,d)=>{d=d||(X-x)/2;return `M${x} ${y}C${x+d} ${y} ${X-d} ${Y} ${X} ${Y}`};
 let grid='';for(let y=237;y<1360;y+=50)grid+=`M1059 ${y+.5}H2025`;for(let x=1202;x<2025;x+=150)grid+=`M${x+.5} 139V1360`;
 const par=(x,y,X,Y,l,tw,light)=>`<gh-node param ${light?'light':''} label="${l}" tw="${tw}" style="${P(x,y,X-x,Y-y)}"></gh-node>`;
 const note=(x,y,X,t,tw,tip)=>`<gh-note tw="${tw}" tip="${(tip-x).toFixed(1)}" style="${P(x,y,X-x)}">${t}</gh-note>`;
 const sdl=(x,y)=>`<gh-node label="Line SDL" tw="54" bx="61" ih="21.700" ins="Start@24;Direction@45;Length@34" outs="Line@19" style="${P(x,y,120.5,69.3)}"></gh-node>`;
 const line=(x,y)=>`<gh-node label="Line" tw="26" bx="63" ins="Start Point@50.3;End Point@46" outs="Line@19" style="${P(x,y,122.2,44.4)}"></gh-node>`;
 shadow(this,`<style>:host{display:block;position:relative;flex:1;overflow:hidden;background:#d4cfc8}svg.bg,svg.ov{position:absolute;left:0;top:0}
 .top{position:absolute;left:0;top:0;width:100%;height:48px;background:repeating-linear-gradient(135deg,rgba(255,255,255,.07) 0 1.500px,transparent 1.500px 3px),linear-gradient(#cfccc3,#cbc8bf 45%,#aaa8a1 75%,#888680);border-bottom:1.500px solid #333;box-sizing:content-box}
 .txt{position:absolute;font:14.500px "Liberation Sans",sans-serif;color:#1a1a1a;line-height:18px}
 .grip{position:absolute;left:-1px;bottom:0;width:7px;height:25px;box-sizing:border-box;background:#86847f;border:1.500px solid #333;border-bottom:0}</style>
 <div class="top"></div>
 <svg class="bg" width="966" height="1221" viewBox="1059 139 966 1221" fill="none">
 <path d="${grid}" stroke="rgba(110,105,95,.2)"/>
 ${box(1040,503,1990.3,912,'rgba(150,155,155,.33)')}
 ${box(1050,677.7,1138.7,764.7,'#7ddad6')}${box(1050,787.7,1140.7,877,'#d673a2')}${box(1184.7,717.7,1325.3,822,'#dfdfdd')}${box(1377.7,754,1447.7,794,'#e3e0dd')}
 ${box(1487.3,683.3,1629.7,747.7,'#7ddad6')}${box(1489.3,776.3,1631.7,840.7,'#d673a2')}${box(1669.3,622.7,1761.3,829.7,'#dfdfdc')}
 ${box(1679.3,632.3,1749.7,672.7,'#ebe88d')}${box(1681.3,704.3,1751.7,744.7,'#93edea')}${box(1680,779.7,1750.7,820,'#e889b7')}${box(1910.7,693.7,1980.3,734,'#dfdfdc')}
 <path d="M1059 654.300L1300 653.300 1685 653" stroke="rgba(80,80,80,.5)"/>
 <path d="${W(1624,716,1688,725)} ${W(1626,809,1687,800)}" stroke="rgba(70,70,70,.5)" stroke-width="1.200"/>
 <path d="${W(1132,721.7,1190,749.3)} ${W(1135,831.7,1190,789.3)} ${W(1320,780,1383,773.7)} M1440 705.700H1493 ${W(1441,773.7,1493,725.7)} ${W(1441,773.7,1495,798.7)} ${W(1447,830,1495,818.7)} ${W(1743,652.7,1780,683.5)} ${W(1745,725,1780,703.5)} M1744 800C1790 798 1736 723.500 1780 723.500" stroke="#555" stroke-width="2.700"/>
 <path d="M1876 712H1916M1876 715.300H1916" stroke="#444" stroke-width="1.300"/></svg>
 ${note(1050,654.5,1182.7,'1. left element direction',114.3,1071)}
 ${note(1050,764.5,1189.7,'2. right element direction',121.6,1073.3)}
 ${note(1207.3,694.5,1302.7,'intersection event',86.3,1255)}${note(1397,730.4,1427.7,'pole',21.3,1412.3)}
 ${note(1511.3,660.7,1605.7,'left element force',84.6,1558.3)}${note(1509.3,753.4,1611.7,'right element force',92.6,1560.3)}
 ${note(1680.3,609.3,1747.7,'centre edge',57,1714.3)}${note(1690,681.3,1742.3,'left edge',42.6,1716.3)}${note(1685.3,756.5,1744.7,'right edge',50.4,1715.3)}${note(1883,670.6,2006.7,'force diagram all edges',113.6,1945.7)}
 <svg class="ov" width="966" height="1221" viewBox="1059 139 966 1221" fill="none"><path d="M1059 779C1100 770 1150 748 1195 729S1310 706 1377 705.700M1059 768C1100 775 1150 792 1195 806S1310 829 1378 830" stroke="rgba(90,90,90,.45)"/></svg>
 ${sdl(1007.8,687.7)}${sdl(1010.3,798)}
 <gh-node label="Line | Line" tw="65.7" bx="40.6" ih="40" ins="Line 1@27.3;Line 2@28" outs="Param A@39.7;Param B@39;Point A@34.7;Point B@33.5" style="${P(1194.7,727.7,121,84.4)}"></gh-node>
 ${par(1380.3,695.3,1437,715.7,'EndPoint',43.3,1)}${par(1387.3,763.3,1437.7,784,'Pt',9.7,1)}${par(1382.3,819.5,1444,840,'StartPoint',48,1)}
 ${line(1497.3,693.7)}${line(1499.3,786.7)}
 ${par(1689.3,642.3,1739.7,663,'Line',19)}${par(1691.3,714.6,1741.7,735,'Line',19)}${par(1690.2,789.7,1740.7,810,'Line',19)}
 <gh-node label="Merge" tw="42" bx="25.7" ins="D1@12.3;D2@12.8;D3@12.8;D4@13" outs="R@5" style="${P(1784.3,671.3,88.4,84.4)}"></gh-node>
 ${par(1920.3,703.3,1970.7,724,'Line',19,1)}
 <div class="txt" style="${P(1059.5,880.3)}"><fit-text w="160">: clockwise order of lines!</fit-text></div>
 <div class="txt" style="${P(1493.2,852)}"><fit-text w="315">by definition:edge orientation closing the polygon!</fit-text></div>
 <div class="grip"></div>`);
 /* the first two notes run under the window's left edge, so their words start after it */
 this.shadowRoot.querySelectorAll('gh-note').forEach((n,i)=>{if(i<2)n.style.paddingLeft='7px'});
}}

class GhApp extends HTMLElement{connectedCallback(){
 const menu=[['File',1069.3,1087.3],['Edit',1104.7,1125],['View',1142,1167.3],['Display',1184.3,1223.7],['Solution',1240.3,1284],['Help',1301,1326.3],['SOFiSTiK',1343.7,1390.7]];
 const tabs=[['Params',1065.3,1100.2,'color:#222;position:relative;top:-1px'],['Maths',1118,1146],['Sets',1162.7,1183.7],['Vector',1201,1231.7],['Curve',1248.7,1275.3],['Surface',1292.3,1328],['Mesh',1345.7,1371],['Intersect',1387.7,1427.7],['Transform',1445.3,1491.3],['Display',1509.3,1542.7],['Kangaroo2',1561.7,1611.3],['SOFiSTiK',1629,1676],['COMPAS',1692.3,1737.3]];
 shadow(this,`<style>:host{display:flex;flex-direction:column;flex:1;height:1360px;box-sizing:border-box;border-left:4px solid #6f7274;background:#f0f0f0;min-width:0}
 .menu{height:26px;margin-top:1px;border-top:1px solid #d8d8d8;background:linear-gradient(90deg,#f0f0f0,#f7f7f7);display:flex;align-items:center;font-size:13px;color:#262626;flex:none}
 .tabs{height:23px;display:flex;align-items:center;font:11.500px "Liberation Sans",sans-serif;color:#6f6f6f;flex:none;padding-bottom:1px;box-sizing:border-box;position:relative;border-bottom:1px solid #bdbdbd;padding-top:3px}
 .act{width:52px;height:23px;margin-right:-52px;flex:none;box-sizing:border-box;background:linear-gradient(#fff,#f4f4f4);border:1px solid #b5b5b5;border-bottom:0;border-radius:6px 6px 0 0;margin-top:-1px}
 .rib{height:58px;flex:none;display:flex;padding:2.500px 0 0 1.300px;gap:3.700px;box-sizing:border-box;background:linear-gradient(#d2d2d2,#eeeeee 45px);border-bottom:2px solid #8f8f8f}
 .tb{height:30px;flex:none;display:flex;align-items:center;background:linear-gradient(#fdfdfd,#f3f3f3);padding-left:2.200px;box-sizing:border-box}
 .combo{width:144.500px;height:23px;box-sizing:border-box;border:1px solid #888;background:#fff;display:flex;align-items:center;font-size:12.500px;color:#222;margin:0 4.500px 0 2.500px}
 .sep{width:1px;height:20px;background:#d0d0d0;margin-left:5.500px}.dd{border:3px solid transparent;border-top:3.500px solid #111;margin:4px 0 0}</style>
 <div class="menu">${row(menu,1059)}</div><div class="tabs"><div class="act"></div>${row(tabs,1059)}</div>
 <div class="rib"><gh-group label="Geometry" tw="42.3" icons="h_pt h_vec | h_circ h_arc h_crv h_line h_pln h_rect | h_box h_brep h_mesh h_srf" style="width:358.400px"></gh-group><gh-group label="Primitive" tw="37" icons="h_bool h_7 h_01 h_A" style="width:115.600px"></gh-group><gh-group label="Input" tw="22" icons="t_sl t_gr | t_tog t_knob t_num t_list | t_pink t_green" style="width:246.700px"></gh-group><gh-group label="Util" tw="14" icons="cherry tree | ar1 ar2 | dna flask" style="width:190.700px"></gh-group></div>
 <div class="tb"><ui-icon name="fopen" size="21" style="width:22px"></ui-icon><ui-icon name="fsave" size="22" style="width:22px;margin-left:7.500px"></ui-icon><span class="sep"></span>
 <div class="combo"><fit-text w="27.300" style="margin-left:3.500px">125%</fit-text><svg width="9" height="6" style="margin-left:100.500px" viewBox="0 0 9 6"><path d="M1 1l3.500 3.500L8 1" fill="none" stroke="#777" stroke-width="1"/></svg></div>
 <ui-icon name="focus" size="23"></ui-icon><span class="dd" style="margin-left:6.500px"></span><ui-icon name="eye" size="22" style="margin-left:6px"></ui-icon><span class="dd" style="margin-left:7px"></span><ui-icon name="brush" size="22" style="margin-left:4.500px"></ui-icon></div>
 <gh-canvas></gh-canvas>`)}}

/* keeps a label at a fixed advance width whatever the installed face measures */
class FitText extends HTMLElement{connectedCallback(){const w=parseFloat(this.getAttribute('w'));
 const r=shadow(this,`<style>:host{display:block;flex:none;width:${w}px;white-space:nowrap}span{display:inline-block;transform-origin:0 50%;white-space:nowrap}</style><span><slot></slot></span>`);
 const s=r.querySelector('span'),n=parseFloat(getComputedStyle(s).width);if(n>0)s.style.transform=`scaleX(${(w/n).toFixed(4)})`}}

[['ui-icon',UiIcon],['rhino-app',RhinoApp],['rhino-toolbar',RhinoToolbar],['rhino-side',RhinoSide],['rhino-view',RhinoView],['rhino-osnap',RhinoOsnap],['gh-app',GhApp],['gh-group',GhGroup],['gh-canvas',GhCanvas],['gh-node',GhNode],['gh-note',GhNote],['fit-text',FitText]].forEach(([n,c])=>customElements.define(n,c));
</script></body></html>
